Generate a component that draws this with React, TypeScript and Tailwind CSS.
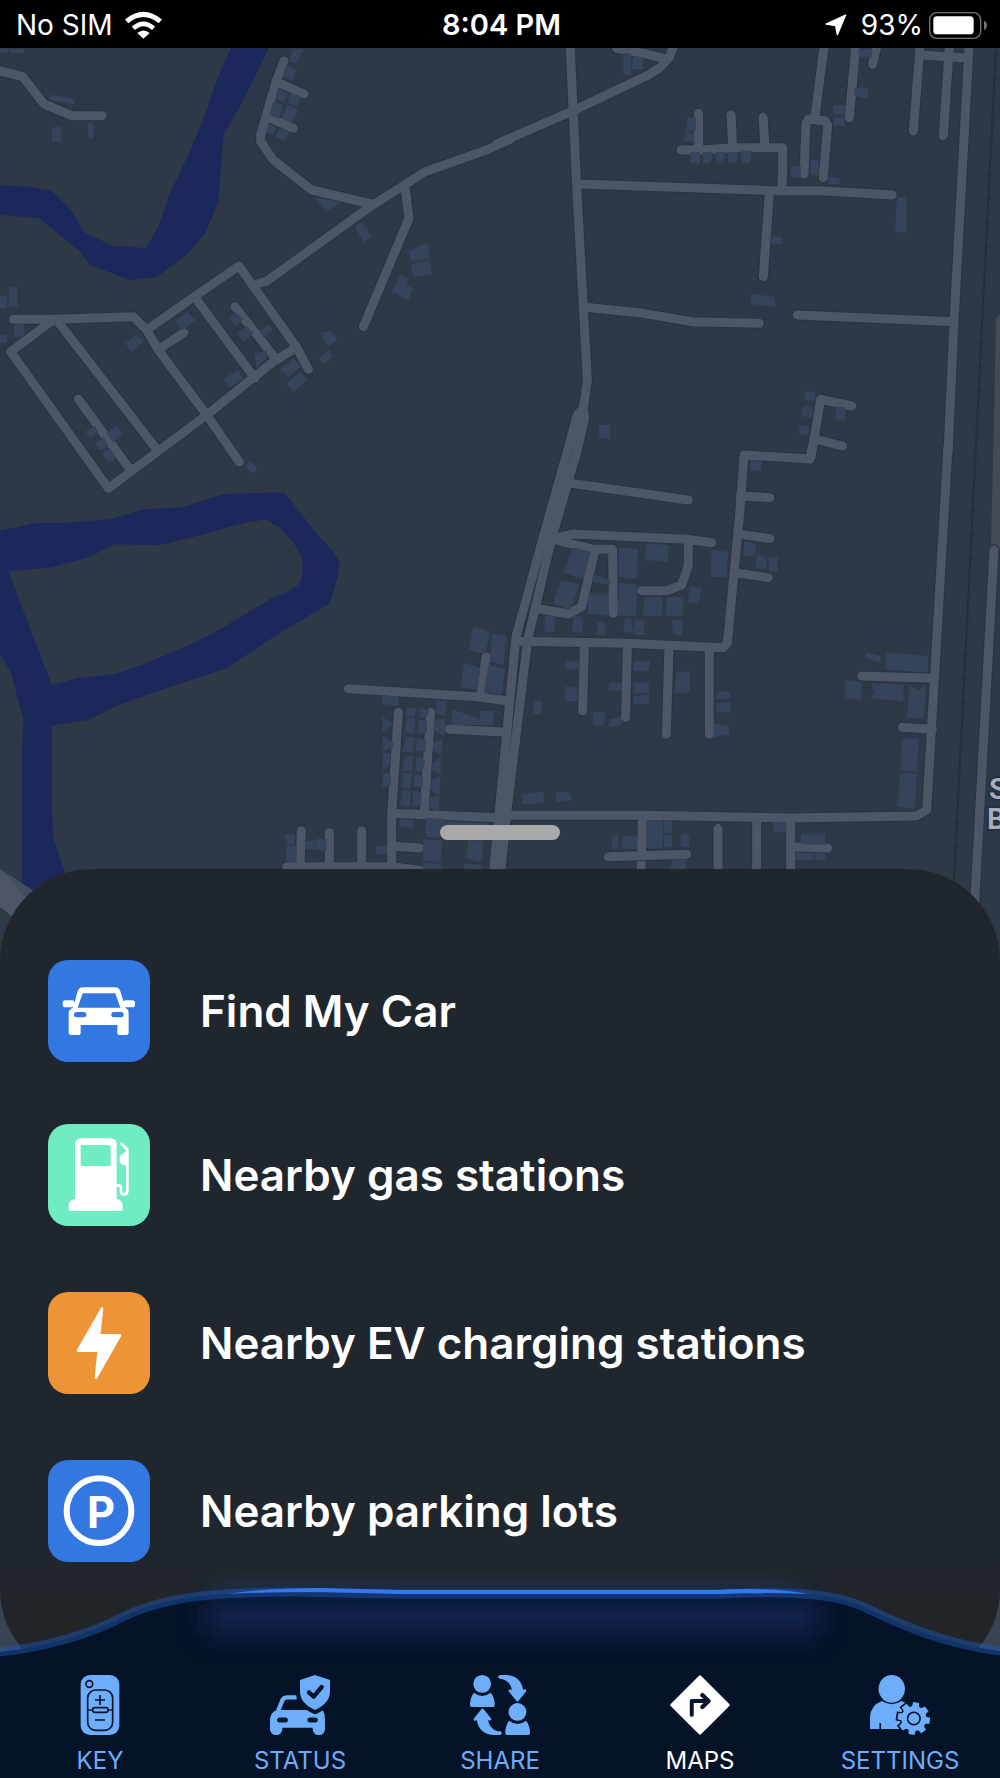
import React, { useState } from 'react';

interface MapTile {
    x: number;
    y: number;
    roads: string;
    buildings: string;
}

interface Place {
    id: string;
    label: string;
    icon: React.ReactNode;
}

interface Tab {
    id: string;
    label: string;
    icon: React.ReactNode;
}

// Each tile covers 500x450 of the map, drawn at three units per map unit
const tiles: MapTile[] = [
    {
        x: 0,
        y: 0,
        roads: `M-20 208L68 230 132 312 215 347H306
            M852 183L828 245 782 405V425L820 480 935 570 1115 612 M828 245L912 282 M800 350L880 385
            M1530 418L1460 450 1275 515 1210 557 1115 617 802 842 762 855 M1215 560L1227 655 1090 980
            M440 990L583 890 717 798 890 1042 925 1108 M890 1042L820 1085 620 1245 325 1465 32 1055 160 960
            M40 958H160L400 950 440 990 475 1050 620 1245 718 1386 M170 960L470 1348 M583 890L765 1135
            M705 920L830 1080 M475 1048L552 998 M235 1197L390 1408`,
        buildings: `M0 147 27 147 22 158 0 158Z M33 147 72 147 72 160 33 160Z M150 284 222 297 222 314 150 300Z
            M156 385 183 378 183 426 156 426Z M262 366 280 370 280 416 266 414Z M880 147 909 147 890 193 868 182Z
            M858 195 889 210 878 243 850 230Z M832 265 864 278 850 307 826 297Z M872 278 904 292 893 320 862 308Z
            M820 305 850 317 838 357 808 345Z M862 315 897 328 872 370 845 352Z M805 372 830 383 820 405 797 395Z
            M838 384 870 395 855 423 828 410Z M942 590 1022 607 978 636Z M1064 680 1083 667 1115 708 1092 727Z
            M1226 752 1284 728 1288 778 1234 784Z M1232 792 1290 781 1295 824 1240 830Z
            M1202 824 1225 838 1220 855 1238 865 1226 900 1175 876Z M27 862 53 862 53 920 27 920Z
            M0 887 21 887 21 925 0 925Z M42 975 72 972 72 1010 42 1010Z M0 1004 21 1004 21 1028 0 1028Z
            M376 1030 408 1005 432 1022 396 1056Z M524 965 562 935 587 960 548 990Z M687 957 706 936 729 958 710 977Z
            M711 998 740 978 762 1000 732 1024Z M778 993 806 973 819 990 790 1012Z M763 1062 800 1050 800 1075 770 1103Z
            M673 1135 715 1110 729 1138 687 1165Z M840 1110 880 1075 905 1098 865 1132Z
            M859 1150 900 1117 923 1138 880 1176Z M962 1000 990 992 1012 1018 984 1042Z
            M956 1075 988 1050 999 1068 970 1095Z M255 1295 285 1278 295 1295 272 1312Z
            M320 1300 350 1275 368 1300 338 1327Z M285 1330 310 1310 325 1335 300 1352Z
            M305 1360 332 1348 350 1375 325 1390Z`,
    },
    {
        x: 500,
        y: 0,
        roads: `M210 130L230 560 262 1140 250 1225 M520 140L508 172 480 203 445 225 220 332 -10 432
            M350 145L440 162 490 175 M235 552L820 572H960L1177 585
            M845 570L848 520V443H700L600 450H543 M596 340V440 M693 345L698 440 M789 352L795 440 M808 580L790 830
            M972 140L945 350 M912 522L918 370 925 358 975 362 983 375 970 533 M1067 140L1048 353 M1130 140L1118 193
            M1260 140L1240 393 M1348 140L1330 407 M1265 165L1385 173 M1407 140L1362 965 1344 1360
            M255 922L430 940 575 965 778 970 M892 945L1362 965 M250 1225L232 1245 203 1350 M250 1225L254 1255 232 1350
            M1055 1218L962 1198 933 1370 M955 1320L1028 1338`,
        buildings: `M370 160 393 160 393 224 370 224Z M400 165 428 175 428 207 395 207Z M562 353 588 353 588 392 558 392Z
            M557 395 582 402 582 426 551 424Z M570 456 600 456 600 490 570 490Z M609 456 638 456 632 490 609 490Z
            M648 456 676 456 670 490 648 490Z M684 456 715 456 710 490 686 490Z M724 452 754 452 750 490 722 488Z
            M872 498 903 498 903 534 872 530Z M932 478 958 483 955 528 930 525Z M985 530 1020 535 1018 552 982 552Z
            M1000 315 1038 317 1036 345 1000 343Z M1003 350 1035 355 1032 378 1001 375Z
            M1065 264 1106 264 1103 295 1063 288Z M1073 148 1117 148 1115 174 1078 172Z
            M1190 592 1220 592 1220 700 1186 695Z M814 710 845 710 845 734 812 728Z M755 882 822 890 825 920 750 912Z
            M916 1173 948 1178 944 1203 911 1198Z M908 1217 940 1222 935 1254 905 1248Z
            M898 1275 928 1280 925 1307 898 1303Z M1010 1218 1037 1222 1033 1263 1006 1258Z
            M297 1275 330 1275 330 1318 297 1312Z`,
    },
    {
        x: 0,
        y: 450,
        roads: `M1045 716L1430 740 1520 752 M1458 620L1442 735 M1195 787L1175 1092V1270 M1292 787L1272 1090
            M1348 838L1510 846 M1175 1090L1510 1104 M1175 1188L1258 1194 M904 1142L900 1245 M988 1148V1245
            M1085 1142V1245 M860 1250H1175L1270 1262`,
        buildings: `M1420 530 1470 545 1455 612 1406 600Z M1475 550 1520 560 1510 645 1470 635Z
            M1393 640 1442 655 1432 720 1381 710Z M1465 645 1515 655 1505 735 1452 725Z
            M1146 737 1195 739 1195 767 1146 762Z M1147 800 1178 822 1147 850Z M1147 857 1180 875 1178 893 1147 902Z
            M1147 908 1170 910 1172 945 1147 960Z M1147 965 1173 975 1172 1005 1147 1012Z
            M1222 775 1250 775 1243 800 1215 800Z M1222 803 1246 803 1243 850 1213 848Z
            M1218 860 1244 862 1238 908 1207 904Z M1217 915 1240 917 1236 965 1207 962Z
            M1212 970 1237 970 1230 1018 1202 1012Z M1210 1020 1232 1022 1230 1070 1199 1065Z
            M1260 775 1288 780 1280 805 1258 800Z M1256 810 1282 812 1280 850 1253 848Z
            M1250 865 1278 870 1276 905 1248 902Z M1250 918 1276 930 1268 962 1246 965Z
            M1244 975 1270 978 1266 1012 1240 1010Z M1239 1022 1265 1028 1262 1065 1239 1070Z
            M1310 752 1340 752 1336 798 1307 788Z M1307 810 1336 805 1334 858 1300 840Z
            M1300 880 1328 865 1325 915 1298 900Z M1297 940 1322 922 1322 972 1296 962Z
            M1292 990 1321 980 1318 1035 1290 1020Z M1290 1045 1318 1037 1316 1082 1286 1075Z
            M1357 778 1440 808 1440 783 1483 783 1478 826 1355 825Z M1200 1107 1239 1110 1239 1134 1195 1128Z
            M1278 1103 1335 1107 1330 1162 1278 1162Z M1270 1168 1328 1172 1322 1235 1270 1232Z
            M1270 1240 1322 1242 1322 1257 1270 1257Z M1405 1170 1450 1172 1445 1237 1398 1225Z
            M1392 1240 1443 1245 1443 1257 1392 1257Z M1338 1115 1465 1118 1465 1125 1338 1125Z
            M853 1152 887 1155 882 1184 860 1184Z M858 1188 890 1188 890 1238 858 1238Z
            M916 1176 945 1172 945 1198 916 1198Z M947 1167 980 1167 980 1200 947 1200Z
            M1128 1188 1160 1188 1160 1212 1128 1212Z M738 48 750 30 773 56 757 72Z`,
    },
    {
        x: 500,
        y: 450,
        roads: `M203 0L130 260 48 560 42 620 -3 1090 -20 1270 M232 0L155 265 83 570 20 1090 2 1270
            M215 100L565 150 M150 268L220 252 560 268 636 278 M160 268L280 298H338L340 490
            M285 300L245 470 205 492 110 475 M565 270V345L545 405 500 422H425
            M937 -12L930 27 732 15 720 180 682 580 670 593 380 580 60 574 M720 138L810 143 M720 253L810 266
            M705 368L805 383 M253 585L248 783 M382 585L377 802 M507 590L499 853 M628 600V853
            M1344 -10L1303 690 1280 1080 1250 1098 870 1104 430 1096H20 M1085 678L1303 685 M1207 832L1297 838
            M427 1100L423 1270 M325 1220L560 1213 M654 1135V1270 M770 1110V1270 M872 1110V1270 M872 1190L983 1194
            M1482 300L1424 1360`,
        buildings: `M218 292 272 305 250 387 190 368Z M182 390 238 402 212 480 158 462Z M357 293 414 297 410 387 355 380Z
            M440 280 506 286 504 335 433 330Z M278 372 330 390 330 405 278 395Z M265 433 327 433 327 495 262 492Z
            M357 400 411 403 409 497 352 497Z M434 440 487 442 485 497 428 497Z M500 442 550 442 550 497 498 497Z
            M570 408 605 414 595 460 563 457Z M634 300 684 305 680 381 633 381Z M752 30 786 32 782 64 750 60Z
            M733 273 768 282 763 320 730 315Z M770 312 800 322 798 358 768 352Z M806 322 833 322 833 367 806 362Z
            M137 495 168 500 162 545 132 548Z M220 498 245 500 247 548 216 545Z M292 516 316 520 316 557 292 553Z
            M376 505 392 508 400 545 370 547Z M406 510 433 512 432 556 402 552Z M516 510 550 510 545 562 518 550Z
            M0 555 20 562 5 640 0 640Z M195 632 240 632 240 658 195 658Z M195 710 232 710 232 753 195 753Z
            M100 753 125 753 125 792 100 792Z M278 787 316 787 312 826 278 826Z M328 808 363 800 363 825 325 832Z
            M326 698 365 698 365 722 326 722Z M401 632 452 632 446 664 401 664Z M400 698 447 698 447 728 400 728Z
            M401 740 447 732 447 762 401 762Z M530 665 570 665 570 728 522 728Z M658 723 691 725 691 748 648 748Z
            M650 760 691 757 691 787 648 787Z M642 820 686 828 690 852 640 862Z M67 1033 131 1026 130 1060 67 1063Z
            M169 1026 208 1027 215 1050 169 1056Z M1097 607 1142 618 1142 638 1097 625Z
            M1160 607 1283 618 1283 668 1155 658Z M1034 690 1083 697 1083 748 1034 748Z
            M1112 700 1211 704 1210 753 1112 745 1124 725Z M1230 705 1255 722 1278 705 1271 806 1220 804Z
            M1206 865 1257 867 1250 965 1202 962Z M1200 968 1250 972 1245 1075 1194 1070Z
            M440 1110 490 1110 487 1195 438 1195Z M492 1110 516 1110 516 1148 492 1148Z
            M492 1155 516 1155 516 1190 492 1190Z M336 1155 355 1155 355 1197 336 1197Z
            M370 1158 412 1160 412 1197 364 1197Z M542 1153 569 1153 569 1190 542 1190Z
            M518 1228 562 1228 555 1257 510 1257Z M820 1115 858 1115 858 1148 820 1146Z
            M903 1153 975 1153 975 1185 903 1183Z M888 1207 942 1210 940 1230 885 1230Z
            M945 1210 975 1210 975 1230 945 1230Z`,
    },
];

const tileTransform = (tile: MapTile): string => `translate(${tile.x} ${tile.y}) scale(${1 / 3})`;

const MapCanvas: React.FC = () => (
    <svg
        className="absolute inset-0 size-full"
        viewBox="0 48 1000 1730"
        preserveAspectRatio="xMidYMin slice"
        role="img"
        aria-label="Map"
    >
        <rect y="48" width="1000" height="1730" fill="#2e3948" />

        {/* River */}
        <g fill="#1c285b" fillRule="evenodd">
            <path
                transform="scale(.33333)"
                d="M695 140L665 205 640 270 605 370 560 475 510 580 475 680 437 745 375 738 345 740 255 698 215 632 155 572 90 560 0 557V645L118 655 240 755 270 795 390 840 472 830 570 755 618 695 655 605 670 405 720 320 760 240 808 140Z"
            />
            <path
                transform="translate(0 450) scale(.33333)"
                d="M0 242L105 220 200 218 330 208 430 178 545 172 672 132 850 127 870 148 955 258 995 298 1018 335 1015 375 990 460 830 555 680 655 440 735 350 768 265 810 155 827V1060L160 1165 195 1270 230 1360H66V900L70 810 32 665 0 612Z M25 363L155 705 230 685 345 672 425 645 540 598 640 550 815 445 865 425 900 400 907 375V325L885 285 840 233 795 208 705 225 615 253 475 286 345 283 265 322 155 352 75 360Z"
            />
        </g>

        {/* Railway */}
        <path d="M996 48L953 900" stroke="#262e39" strokeWidth="2" />
        <path d="M996 55L953 900" stroke="#262e39" strokeWidth="6" strokeDasharray="1 11" />

        {/* Highway corners */}
        <path d="M0 869L35 892 13 917 0 907Z" fill="#4e5665" />
        <path d="M0 869L35 892 28 900Z" fill="#434e5e" />
        <path d="M1001 320L999 420 996 545" stroke="#434b58" strokeWidth="10" strokeLinecap="round" fill="none" />
        <path d="M0 1560H40V1700H0Z M960 1600H1000V1700H960Z" fill="#384353" />

        <g fill="none" stroke="#2a3342" strokeWidth="34" strokeLinejoin="round" strokeLinecap="round">
            {tiles.map((tile) => (
                <path key={`${tile.x}-${tile.y}`} transform={tileTransform(tile)} d={tile.roads} />
            ))}
        </g>
        <g fill="none" stroke="#4c5667" strokeWidth="27" strokeLinejoin="round" strokeLinecap="round">
            {tiles.map((tile) => (
                <path key={`${tile.x}-${tile.y}`} transform={tileTransform(tile)} d={tile.roads} />
            ))}
        </g>
        <g fill="#35445b">
            {tiles.map((tile) => (
                <path key={`${tile.x}-${tile.y}`} transform={tileTransform(tile)} d={tile.buildings} />
            ))}
        </g>

        <g
            className="font-['Roboto',sans-serif] text-[29px] font-semibold"
            fill="#a6afbd"
            stroke="#262f3d"
            strokeWidth="4"
            paintOrder="stroke"
        >
            <text x="989" y="799">S</text>
            <text x="987" y="829">B</text>
        </g>
    </svg>
);

const StatusBar: React.FC = () => (
    <header className="grid h-12 grid-cols-3 items-center bg-black pt-[2px] pr-[13px] pl-4 text-[28px] leading-8 text-white">
        <div className="flex items-center gap-3">
            <span>No SIM</span>
            <svg className="h-[28px] w-[37px]" viewBox="0 0 111 84" fill="none" stroke="#fff" role="img" aria-label="Wi-Fi">
                <path d="M5 31Q55 -11 106 31" strokeWidth="15" />
                <path d="M25 52Q55 25 86 52" strokeWidth="14" />
                <path d="M55 83L37 66Q55 51 74 66Z" fill="#fff" stroke="none" />
            </svg>
        </div>
        <span className="text-center text-[29px] font-semibold">8:04 PM</span>
        <div className="flex items-center justify-end gap-[6px]">
            <svg className="mr-2 size-[22px]" viewBox="0 0 66 66" role="img" aria-label="Location in use">
                <path
                    d="M62 3L37 62 32 35 3 30Z"
                    fill="#fff"
                    stroke="#fff"
                    strokeWidth="4"
                    strokeLinejoin="round"
                />
            </svg>
            <span>93%</span>
            <svg className="h-[27px] w-[58px]" viewBox="0 0 174 81" role="img" aria-label="Battery">
                <rect x="2" y="2" width="153" height="77" rx="21" fill="none" stroke="#757575" strokeWidth="4" />
                <rect x="13" y="13" width="121" height="54" rx="11" fill="#fff" />
                <path d="M165 26Q174 30 174 40T165 54Z" fill="#757575" />
            </svg>
        </div>
    </header>
);

const CarIcon: React.FC = () => (
    <svg className="size-[102px] shrink-0 rounded-[20px] bg-[#3377e1]" viewBox="0 0 306 306" fill="#fff" aria-hidden="true">
        <rect x="44" y="121" width="36" height="21" rx="8" />
        <rect x="225" y="121" width="36" height="21" rx="8" />
        <path
            fillRule="evenodd"
            d="M75 143L89 94Q93 82 104 82H202Q213 82 217 94L232 143Q242 148 242 160V218Q242 225 235 225H216Q208 225 208 218V195H98V218Q98 225 90 225H69Q62 225 62 218V160Q62 148 75 143Z M104 100L89 143H217L202 100Z M86 156A8 8 0 0 0 86 172H107A8 8 0 0 0 107 156Z M198 156A8 8 0 0 0 198 172H219A8 8 0 0 0 219 156Z"
        />
    </svg>
);

const GasIcon: React.FC = () => (
    <svg className="size-[102px] shrink-0 rounded-[20px] bg-[#70edc0]" viewBox="0 0 306 306" fill="#fff" aria-hidden="true">
        <path
            fillRule="evenodd"
            d="M81 225V62Q81 43 100 43H187Q206 43 206 62V225Q224 228 224 245V254Q224 261 217 261H69Q62 261 62 254V245Q62 228 81 225Z M102 63Q98 63 98 67V122Q98 126 102 126H184Q188 126 188 122V67Q188 63 184 63Z"
        />
        <path
            d="M206 184H211Q219 184 219 193V200Q219 211 229 211 238 211 238 200V77L220 59"
            fill="none"
            stroke="#fff"
            strokeWidth="8"
            strokeLinecap="round"
        />
        <path d="M238 78L217 95Q210 111 222 122L238 126Z" />
    </svg>
);

const BoltIcon: React.FC = () => (
    <svg className="size-[102px] shrink-0 rounded-[20px] bg-[#ef9337]" viewBox="0 0 306 306" aria-hidden="true">
        <path
            d="M162 50L90 176H152L144 257 216 130H153Z"
            fill="#fff"
            stroke="#fff"
            strokeWidth="8"
            strokeLinejoin="round"
        />
    </svg>
);

const ParkingIcon: React.FC = () => (
    <svg className="size-[102px] shrink-0 rounded-[20px] bg-[#3377e1]" viewBox="0 0 306 306" aria-hidden="true">
        <circle cx="153" cy="152" r="97" fill="none" stroke="#fff" strokeWidth="18" />
        <text x="159" y="204" fill="#fff" textAnchor="middle" className="text-[130px] font-bold">
            P
        </text>
    </svg>
);

const KeyIcon: React.FC = () => (
    <svg className="size-[60px]" viewBox="0 0 180 180" fill="none" stroke="#06142a" strokeWidth="5" aria-hidden="true">
        <rect x="32" width="116" height="180" rx="28" fill="#6eadf9" stroke="none" />
        <circle cx="58" cy="27" r="10" />
        <rect x="53" y="45" width="75" height="121" rx="24" />
        <path d="M90 60V90M75 75H105M75 135H105" />
        <path d="M53 105H128" strokeWidth="4" />
        <rect x="68" y="98" width="46" height="14" rx="6" fill="#6eadf9" />
    </svg>
);

const StatusIcon: React.FC = () => (
    <svg className="size-[60px]" viewBox="0 0 180 180" aria-hidden="true">
        <path d="M24 108L38 74Q42 67 52 67H80" fill="none" stroke="#6eadf9" strokeWidth="13" />
        <path
            d="M0 132Q2 112 20 105H158Q165 116 165 132V163A18 17 0 0 1 128 163V158H37V163A18 17 0 0 1 0 163Z"
            fill="#6eadf9"
        />
        <path
            d="M135 0L180 15V52Q178 86 135 105 92 86 90 52V15Z"
            fill="#6eadf9"
            stroke="#06142a"
            strokeWidth="24"
            paintOrder="stroke"
        />
        <path d="M29 135H46M120 135H136" stroke="#06142a" strokeWidth="15" strokeLinecap="round" />
        <path
            d="M117 52L131 65 155 36"
            fill="none"
            stroke="#06142a"
            strokeWidth="13"
            strokeLinecap="round"
            strokeLinejoin="round"
        />
    </svg>
);

const ShareIcon: React.FC = () => {
    const person = (
        <>
            <circle cx="37" cy="27" r="27" />
            <path d="M0 92Q0 68 12 54 37 74 63 54 75 68 75 92 75 97 70 97H5Q0 97 0 92Z" />
        </>
    );
    const arrow =
        'M90 0H112C143 2 158 22 161 45L167 43Q173 44 170 50L147 79Q144 82 141 79L118 50Q115 44 120 44L127 45C122 22 108 12 90 11Q81 6 90 0Z';

    return (
        <svg className="size-[60px]" viewBox="0 0 182 182" fill="#6eadf9" aria-hidden="true">
            {person}
            <g transform="translate(107 85)">{person}</g>
            <path d={arrow} />
            <path d={arrow} transform="rotate(180 91 91)" />
        </svg>
    );
};

const MapsIcon: React.FC = () => (
    <svg className="size-[60px]" viewBox="0 0 182 182" fill="none" strokeLinejoin="round" aria-hidden="true">
        <path d="M91 5L177 91 91 177 5 91Z" fill="#fff" stroke="#fff" strokeWidth="8" />
        <path d="M66 121V79H116" stroke="#06142a" strokeWidth="12" strokeLinecap="round" />
        <path d="M98 61L117 79 98 97" stroke="#06142a" strokeWidth="13" strokeLinecap="round" />
    </svg>
);

const SettingsIcon: React.FC = () => {
    const teeth = [0, 45, 90, 135, 180, 225, 270, 315];

    return (
        <svg className="size-[60px]" viewBox="0 0 182 182" fill="#6eadf9" aria-hidden="true">
            <ellipse cx="66" cy="42" rx="40" ry="42" />
            <path d="M0 164V128Q2 92 36 79 66 98 96 79L120 90V164Z" />
            <path d="M31 146V166" stroke="#06142a" strokeWidth="5" />
            <g transform="rotate(8 133 132)">
                <g fill="#06142a">
                    <circle cx="133" cy="132" r="43" />
                    {teeth.map((angle) => (
                        <rect key={angle} x="119" y="78" width="28" height="30" transform={`rotate(${angle} 133 132)`} />
                    ))}
                </g>
                <circle cx="133" cy="132" r="38" />
                {teeth.map((angle) => (
                    <path key={angle} d="M122 98L124 83H142L144 98Z" transform={`rotate(${angle} 133 132)`} />
                ))}
            </g>
            <circle cx="133" cy="132" r="19" stroke="#06142a" strokeWidth="5" />
        </svg>
    );
};

const nearby: Place[] = [
    { id: 'gas', label: 'Nearby gas stations', icon: <GasIcon /> },
    { id: 'ev', label: 'Nearby EV charging stations', icon: <BoltIcon /> },
    { id: 'parking', label: 'Nearby parking lots', icon: <ParkingIcon /> },
];

const tabs: Tab[] = [
    { id: 'key', label: 'KEY', icon: <KeyIcon /> },
    { id: 'status', label: 'STATUS', icon: <StatusIcon /> },
    { id: 'share', label: 'SHARE', icon: <ShareIcon /> },
    { id: 'maps', label: 'MAPS', icon: <MapsIcon /> },
    { id: 'settings', label: 'SETTINGS', icon: <SettingsIcon /> },
];

const PlaceButton: React.FC<{ place: Place }> = ({ place }) => (
    <button type="button" className="flex w-full items-center gap-[50px] text-left text-[44px] leading-[54px] font-semibold text-white">
        {place.icon}
        <span>{place.label}</span>
    </button>
);

const curve = 'M-10 68C45 63 90 49 125 31 165 12 215 7 290 7L400 9H720C790 6 835 8 866 23 895 37 945 61 1010 67';

const TabBar: React.FC = () => {
    const [active, setActive] = useState<string>('maps');

    return (
        <nav className="relative -mt-24 pt-[90px] pb-[3px]">
            <svg
                className="absolute inset-0 size-full overflow-visible"
                viewBox="0 0 1000 193"
                preserveAspectRatio="none"
                aria-hidden="true"
            >
                <defs>
                    <filter id="glow" x="-10%" y="-100%" width="120%" height="300%">
                        <feGaussianBlur stdDeviation="12" />
                    </filter>
                </defs>
                <rect x="210" y="0" width="590" height="14" fill="#2f5fa8" opacity=".3" filter="url(#glow)" />
                <path d={`${curve}V193H-10Z`} fill="#051328" />
                <rect x="205" y="12" width="615" height="40" fill="#14265a" opacity=".7" filter="url(#glow)" />
                <path d={curve} fill="none" stroke="#1f5cba" strokeOpacity=".45" strokeWidth="9" />
                <path d="M228 9Q265 3 320 3L400 5H715Q775 2 808 9 770 7 720 9H400L320 7Q265 7 228 9Z" fill="#3478f0" />
            </svg>
            <div className="relative grid grid-cols-5">
                {tabs.map((tab) => (
                    <button
                        key={tab.id}
                        type="button"
                        onClick={() => setActive(tab.id)}
                        className={`flex flex-col items-center gap-3 text-[24px] leading-7 ${active === tab.id ? 'text-white' : 'text-[#6eadf9]'}`}
                    >
                        {tab.icon}
                        <span>{tab.label}</span>
                    </button>
                ))}
            </div>
        </nav>
    );
};

const App: React.FC = () => {
    return (
        <div className="flex min-h-screen flex-col overflow-hidden bg-black font-['Inter',sans-serif]">
            <StatusBar />
            <main className="relative flex flex-1 flex-col">
                <MapCanvas />
                <div className="relative flex min-h-[400px] flex-1 items-end justify-center pb-[29px]">
                    <button type="button" aria-label="Resize panel" className="h-[15px] w-[120px] rounded-full bg-[#a9a9a9]" />
                </div>
                <section className="relative rounded-[92px] bg-linear-to-b from-[#20262d] via-[#20262d] via-85% to-[#232425] px-12 pt-[91px] pb-[119px]">
                    <PlaceButton place={{ id: 'car', label: 'Find My Car', icon: <CarIcon /> }} />
                    <ul className="mt-[62px] flex flex-col gap-[66px]">
                        {nearby.map((place) => (
                            <li key={place.id}>
                                <PlaceButton place={place} />
                            </li>
                        ))}
                    </ul>
                </section>
                <TabBar />
            </main>
        </div>
    );
};

export default App;
